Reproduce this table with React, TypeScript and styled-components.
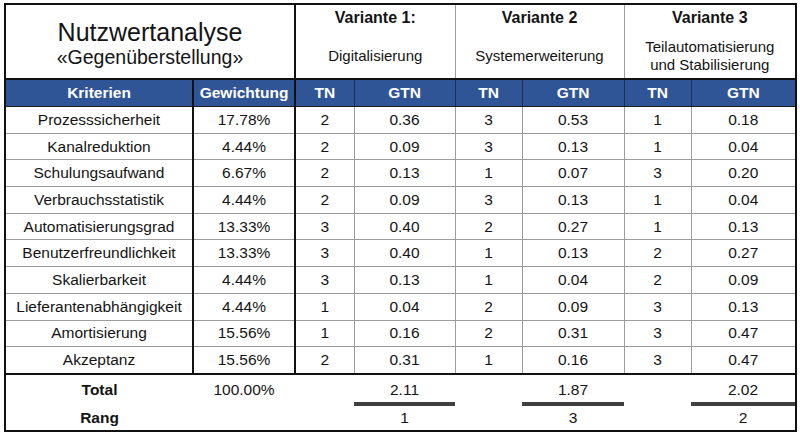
import React from "react";
import styled, { createGlobalStyle } from "styled-components";

type Variant = { name: string; subtitle: string[] };
type Row = { label: string; weight: string; values: [string, string][] };

const variants: Variant[] = [
  { name: "Variante 1:", subtitle: ["Digitalisierung"] },
  { name: "Variante 2", subtitle: ["Systemerweiterung"] },
  { name: "Variante 3", subtitle: ["Teilautomatisierung", "und Stabilisierung"] },
];

const rows: Row[] = [
  { label: "Prozesssicherheit", weight: "17.78%", values: [["2", "0.36"], ["3", "0.53"], ["1", "0.18"]] },
  { label: "Kanalreduktion", weight: "4.44%", values: [["2", "0.09"], ["3", "0.13"], ["1", "0.04"]] },
  { label: "Schulungsaufwand", weight: "6.67%", values: [["2", "0.13"], ["1", "0.07"], ["3", "0.20"]] },
  { label: "Verbrauchsstatistik", weight: "4.44%", values: [["2", "0.09"], ["3", "0.13"], ["1", "0.04"]] },
  { label: "Automatisierungsgrad", weight: "13.33%", values: [["3", "0.40"], ["2", "0.27"], ["1", "0.13"]] },
  { label: "Benutzerfreundlichkeit", weight: "13.33%", values: [["3", "0.40"], ["1", "0.13"], ["2", "0.27"]] },
  { label: "Skalierbarkeit", weight: "4.44%", values: [["3", "0.13"], ["1", "0.04"], ["2", "0.09"]] },
  { label: "Lieferantenabhängigkeit", weight: "4.44%", values: [["1", "0.04"], ["2", "0.09"], ["3", "0.13"]] },
  { label: "Amortisierung", weight: "15.56%", values: [["1", "0.16"], ["2", "0.31"], ["3", "0.47"]] },
  { label: "Akzeptanz", weight: "15.56%", values: [["2", "0.31"], ["1", "0.16"], ["3", "0.47"]] },
];

const totals = ["2.11", "1.87", "2.02"];
const ranks = ["1", "3", "2"];

const colWidths = [188, 102, 59, 101, 67, 102, 67, 105];

const BLACK = "#111";
const GRAY = "#9c9c9c";
const BLUE = "#2f5597";

const GlobalStyle = createGlobalStyle`
  body {
    margin: 0;
    background: #fff;
  }
`;

const Table = styled.table`
  border-collapse: collapse;
  table-layout: fixed;
  width: 791px;
  margin: 3px 0 0 4px;
  border: 2px solid ${BLACK};
  font-family: "Liberation Sans", Arial, sans-serif;
  color: #141414;
  text-align: center;
`;

const TitleCell = styled.td`
  height: 70px;
  padding: 3px 0 0 0;
  border-right: 2px solid ${BLACK};
  border-bottom: 2px solid ${BLACK};
  vertical-align: middle;
`;

const Title = styled.div`
  font-size: 25px;
  line-height: 28px;
`;

const SubTitle = styled.div`
  font-size: 19.5px;
  line-height: 22px;
`;

const VariantCell = styled.td<{ $last?: boolean }>`
  padding: 0;
  vertical-align: top;
  border-bottom: 2px solid ${BLACK};
  border-right: ${(p) => (p.$last ? `2px solid ${BLACK}` : `1px solid ${GRAY}`)};
`;

const VariantBox = styled.div`
  height: 73px;
  display: flex;
  flex-direction: column;
`;

const VariantName = styled.div`
  padding-top: 4px;
  font-size: 16px;
  font-weight: 700;
  line-height: 18px;
`;

const VariantSub = styled.div`
  flex: 1;
  display: flex;
  flex-direction: column;
  justify-content: center;
  padding-top: 7px;
  font-size: 15px;
  line-height: 18px;
`;

const HeadCell = styled.th<{ $thick?: boolean }>`
  height: 26px;
  padding: 0;
  background: ${BLUE};
  color: #fff;
  font-size: 15.5px;
  font-weight: 700;
  border-bottom: 1px solid #1c1c1c;
  border-right: ${(p) => (p.$thick ? `2px solid ${BLACK}` : "1px solid #1f2f4f")};
`;

const DataCell = styled.td<{ $thick?: boolean; $lastRow?: boolean }>`
  height: 25.7px;
  padding: 0;
  font-size: 15.5px;
  white-space: nowrap;
  border-right: ${(p) => (p.$thick ? `2px solid ${BLACK}` : `1px solid ${GRAY}`)};
  border-bottom: ${(p) => (p.$lastRow ? `2px solid ${BLACK}` : `1px solid ${GRAY}`)};
`;

const SumCell = styled.td<{ $bold?: boolean; $rank?: boolean }>`
  height: 24px;
  padding: ${(p) => (p.$rank ? "0" : "6px 0 0 0")};
  vertical-align: ${(p) => (p.$rank ? "middle" : "top")};
  font-size: 15.5px;
  line-height: 18px;
  font-weight: ${(p) => (p.$bold ? 700 : 400)};
`;

const Bar = styled.div`
  height: 4px;
  margin-top: 3px;
  background: #404040;
`;

export default function App() {
  return (
    <>
      <GlobalStyle />
      <Table>
        <colgroup>
          {colWidths.map((w, i) => (
            <col key={i} style={{ width: w }} />
          ))}
        </colgroup>
        <tbody>
          <tr>
            <TitleCell colSpan={2}>
              <Title>Nutzwertanalyse</Title>
              <SubTitle>«Gegenüberstellung»</SubTitle>
            </TitleCell>
            {variants.map((v, i) => (
              <VariantCell key={v.name} colSpan={2} $last={i === variants.length - 1}>
                <VariantBox>
                  <VariantName>{v.name}</VariantName>
                  <VariantSub>
                    {v.subtitle.map((s) => (
                      <div key={s}>{s}</div>
                    ))}
                  </VariantSub>
                </VariantBox>
              </VariantCell>
            ))}
          </tr>
          <tr>
            <HeadCell $thick>Kriterien</HeadCell>
            <HeadCell $thick>Gewichtung</HeadCell>
            {variants.map((v) => (
              <React.Fragment key={v.name}>
                <HeadCell>TN</HeadCell>
                <HeadCell>GTN</HeadCell>
              </React.Fragment>
            ))}
          </tr>
          {rows.map((r, ri) => {
            const last = ri === rows.length - 1;
            return (
              <tr key={r.label}>
                <DataCell $thick $lastRow={last}>{r.label}</DataCell>
                <DataCell $thick $lastRow={last}>{r.weight}</DataCell>
                {r.values.map(([tn, gtn], vi) => (
                  <React.Fragment key={vi}>
                    <DataCell $lastRow={last}>{tn}</DataCell>
                    <DataCell $lastRow={last}>{gtn}</DataCell>
                  </React.Fragment>
                ))}
              </tr>
            );
          })}
          <tr>
            <SumCell $bold>Total</SumCell>
            <SumCell>100.00%</SumCell>
            {totals.map((t, i) => (
              <React.Fragment key={i}>
                <SumCell />
                <SumCell>
                  {t}
                  <Bar />
                </SumCell>
              </React.Fragment>
            ))}
          </tr>
          <tr>
            <SumCell $bold $rank>Rang</SumCell>
            <SumCell $rank />
            {ranks.map((r, i) => (
              <React.Fragment key={i}>
                <SumCell $rank />
                <SumCell $rank>{r}</SumCell>
              </React.Fragment>
            ))}
          </tr>
        </tbody>
      </Table>
    </>
  );
}
